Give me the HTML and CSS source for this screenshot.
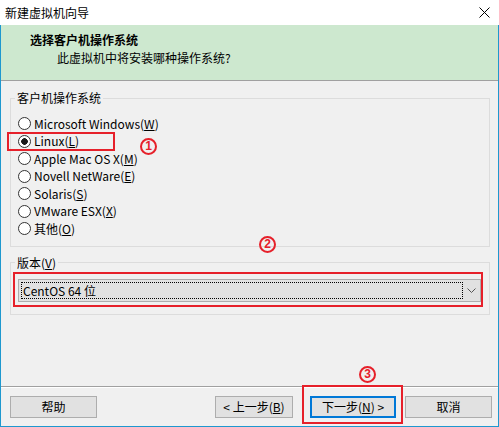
FILE: index.html
```html
<!DOCTYPE html>
<html lang="zh-CN">
<head>
<meta charset="utf-8">
<title>新建虚拟机向导</title>
<link rel="stylesheet" href="styles.css">
</head>
<body>
<div class="window">
  <div class="titlebar">
    <span class="title">新建虚拟机向导</span>
    <svg class="close" width="11" height="11" viewBox="0 0 11 11"><path d="M0.5 0.5 L10.5 10.5 M10.5 0.5 L0.5 10.5" stroke="#000" stroke-width="1" fill="none"/></svg>
  </div>
  <div class="main">
    <div class="header">
      <div class="h-title">选择客户机操作系统</div>
      <div class="h-sub">此虚拟机中将安装哪种操作系统?</div>
    </div>
    <div class="content">
      <fieldset class="group group-os">
        <legend>客户机操作系统</legend>
        <div class="radios">
          <label class="radio"><input type="radio" name="os"><span>Microsoft Windows(<u>W</u>)</span></label>
          <label class="radio"><input type="radio" name="os" checked><span>Linux(<u>L</u>)</span></label>
          <label class="radio"><input type="radio" name="os"><span>Apple Mac OS X(<u>M</u>)</span></label>
          <label class="radio"><input type="radio" name="os"><span>Novell NetWare(<u>E</u>)</span></label>
          <label class="radio"><input type="radio" name="os"><span>Solaris(<u>S</u>)</span></label>
          <label class="radio"><input type="radio" name="os"><span>VMware ESX(<u>X</u>)</span></label>
          <label class="radio"><input type="radio" name="os"><span>其他(<u>O</u>)</span></label>
        </div>
      </fieldset>
      <fieldset class="group group-ver">
        <legend>版本(<u>V</u>)</legend>
        <div class="select">
          <div class="select-value">CentOS 64 位</div>
          <div class="select-arrow"><svg width="9" height="5" viewBox="0 0 9 5"><polyline points="0.5,0.5 4.5,4.5 8.5,0.5" fill="none" stroke="#555" stroke-width="1"/></svg></div>
        </div>
      </fieldset>
    </div>
    <div class="footer">
      <button class="btn btn-help">帮助</button>
      <button class="btn btn-back">&lt; 上一步(<u>B</u>)</button>
      <button class="btn btn-next">下一步(<u>N</u>) &gt;</button>
      <button class="btn btn-cancel">取消</button>
    </div>
  </div>

  <div class="mark mark-box box1"></div>
  <div class="mark mark-num num1">1</div>
  <div class="mark mark-num num2">2</div>
  <div class="mark mark-box box2"></div>
  <div class="mark mark-box box3"></div>
  <div class="mark mark-num num3">3</div>
</div>
</body>
</html>
```
FILE: styles.css
```css
* { box-sizing: border-box; }
html, body { margin: 0; padding: 0; }
body {
  width: 499px;
  height: 427px;
  overflow: hidden;
  font-family: "Noto Sans CJK SC", "Liberation Sans", sans-serif;
  font-size: 12px;
  color: #000;
  background: #f0f0f0;
}
.window {
  position: relative;
  width: 499px;
  height: 427px;
  display: flex;
  flex-direction: column;
}
.titlebar {
  height: 25px;
  background: #fff;
  display: flex;
  align-items: center;
  justify-content: space-between;
  padding: 0 9px 0 5px;
}
.title { line-height: 25px; }
.close { display: block; }

.main {
  flex: 1;
  display: flex;
  flex-direction: column;
  border: 1px solid #1e98cf;
  border-top: none;
  background: #f0f0f0;
}
.header {
  height: 56px;
  background: #cde8cf;
  border-bottom: 1px solid #a0a0a0;
  padding-top: 7px;
}
.h-title {
  font-weight: bold;
  line-height: 16px;
  padding-left: 29px;
}
.h-sub {
  line-height: 16px;
  margin-top: 2px;
  padding-left: 56px;
}
.content {
  flex: 1;
  padding: 0 8px 0 9px;
}
.group {
  margin: 0;
  border: 1px solid #dcdcdc;
  min-inline-size: 0;
}
.group legend {
  padding: 0 2px;
  margin-left: -3px;
  line-height: 16px;
}
.group-os {
  margin-top: 9px;
  padding: 9px 8px 8px 7px;
}
.group-ver {
  margin-top: 8px;
  padding: 8px 8px 12px 7px;
}
.radios {
  display: flex;
  flex-direction: column;
}
.radio {
  height: 17.5px;
  display: flex;
  align-items: center;
  gap: 3px;
  line-height: 16px;
}
.radio input {
  appearance: none;
  -webkit-appearance: none;
  margin: 0;
  width: 13px;
  height: 13px;
  border: 1px solid #333;
  border-radius: 50%;
  background: #fff;
  flex: none;
}
.radio input:checked {
  background: radial-gradient(circle, #1a1a1a 0 3px, #fff 3.6px);
}
.select {
  height: 23px;
  display: flex;
  border: 1px solid #adadad;
  background: #e1e1e1;
}
.select-value {
  flex: 1;
  margin: 2px 0 2px 2px;
  border: 1px dotted #000;
  line-height: 15px;
  padding-left: 1px;
}
.select-arrow {
  width: 17px;
  display: flex;
  align-items: center;
  justify-content: center;
}
.select-arrow svg { display: block; }

.footer {
  height: 40px;
  border-top: 1px solid #a0a0a0;
  box-shadow: inset 0 1px 0 #fff;
  display: flex;
  align-items: flex-start;
  padding: 9px 6px 0 9px;
}
.btn {
  height: 22px;
  border: 1px solid #adadad;
  background: #e1e1e1;
  font-family: inherit;
  font-size: 12px;
  color: #000;
  padding: 0;
  line-height: 18px;
}
.btn-help { width: 87px; }
.btn-back { width: 78px; margin-left: auto; }
.btn-next { width: 86px; margin-left: 17px; border: 2px solid #0078d7; }
.btn-cancel { width: 87px; margin-left: 9px; }

.mark { position: absolute; }
.mark-box { border: 2px solid #e6202a; }
.box1 { left: 7px; top: 132px; width: 108px; height: 19px; }
.box2 { left: 13px; top: 272px; width: 470px; height: 35px; }
.box3 { left: 302px; top: 385px; width: 101px; height: 39px; }
.mark-num {
  width: 17px;
  height: 17px;
  border: 2px solid #e6202a;
  border-radius: 50%;
  color: #e6202a;
  font-family: "Liberation Sans", sans-serif;
  font-weight: bold;
  font-size: 12px;
  line-height: 13px;
  text-align: center;
}
.num1 { left: 140px; top: 138px; }
.num2 { left: 259px; top: 236px; }
.num3 { left: 359px; top: 366px; }
```
